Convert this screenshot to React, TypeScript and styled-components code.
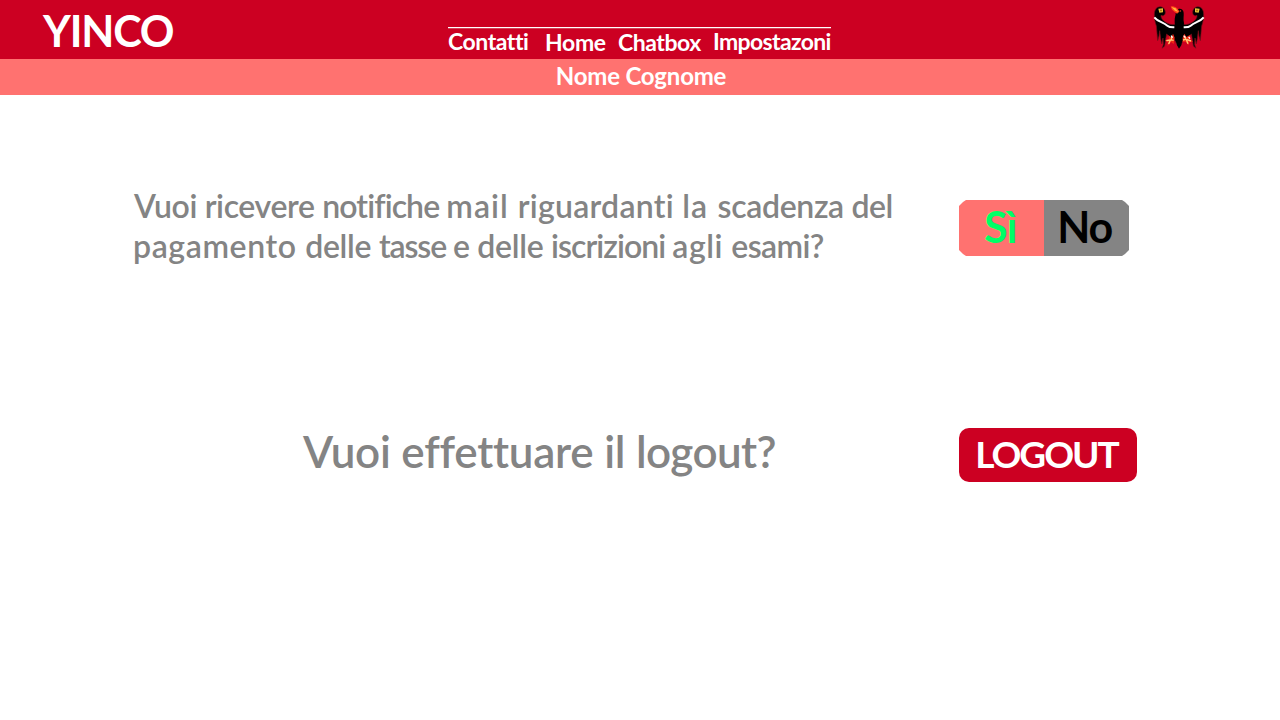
import React from 'react';
import styled, { createGlobalStyle } from 'styled-components';

const GlobalStyle = createGlobalStyle`
  body {
    margin: 0;
    background: #fff;
    font-family: Lato, "Liberation Sans", sans-serif;
    font-weight: 700;
    font-variant-ligatures: none;
  }
`;

const Header = styled.header`
  display: grid;
  grid-template-columns: 448px 383px 1fr;
  align-items: start;
  height: 59px;
  background: #cc0022;
  color: #fff;
`;

const Brand = styled.div`
  padding-left: 43px;
  font-size: 43px;
  line-height: 61px;
  height: 59px;
  letter-spacing: -1.2px;
`;

const Nav = styled.nav`
  margin-top: 27px;
  border-top: 1px solid #fff;
  box-shadow: inset 0 1px #d64059;
`;

const NavList = styled.div`
  display: grid;
  grid-template-columns: 97px 73px 95px auto;
  justify-content: start;
  padding-top: 1px;
`;

const NavLink = styled.a<{ $drop?: number; $spacing?: number }>`
  padding-top: ${p => p.$drop ?? 0}px;
  font-size: 23px;
  line-height: 24px;
  letter-spacing: ${p => p.$spacing ?? 0}px;
  white-space: nowrap;
`;

const Crest = styled.svg`
  width: 54px;
  height: 48px;
  margin: 3px 74px 0 auto;
`;

const UserBar = styled.div`
  height: 36px;
  line-height: 34px;
  padding-left: 2px;
  background: #ff7270;
  color: #fff;
  text-align: center;
  font-size: 24px;
  letter-spacing: -0.2px;
`;

const Settings = styled.main`
  padding-left: 134px;
  color: #848484;
  font-weight: 600;
`;

const Setting = styled.section<{ $top: number }>`
  display: grid;
  grid-template-columns: 825px auto;
  justify-content: start;
  align-items: start;
  padding-top: ${p => p.$top}px;
`;

const Question = styled.p`
  margin: 0;
  font-size: 32px;
  line-height: 40px;
  white-space: nowrap;
`;

const Line = styled.span<{ $shift?: number }>`
  display: block;
  margin-left: ${p => p.$shift ?? 0}px;
`;

const Word = styled.span<{ $spacing: number }>`
  letter-spacing: ${p => p.$spacing}px;
`;

const LogoutQuestion = styled.p`
  margin: 0;
  padding-left: 169px;
  font-size: 44px;
  line-height: 48px;
  white-space: nowrap;
`;

const Toggle = styled.div`
  display: flex;
  width: 170px;
  height: 56px;
  margin-top: 14px;
  clip-path: polygon(7px 0, 163px 0, 166px 2px, 170px 6px, 170px 50px, 166px 54px, 163px 56px, 7px 56px, 4px 54px, 0 50px, 0 6px, 4px 2px);
`;

const Option = styled.button<{ $on?: boolean }>`
  flex: 1;
  padding: ${p => (p.$on ? '1px 2px 3px 0' : '1px 3px 3px 0')};
  border: 0;
  background: ${p => (p.$on ? '#ff7270' : '#848484')};
  color: ${p => (p.$on ? '#00ff66' : '#000')};
  font: 700 43px/52px Lato, sans-serif;
  letter-spacing: -1px;
`;

const LogoutButton = styled.button`
  width: 178px;
  height: 54px;
  margin-top: 1px;
  padding: 1px 3px 3px 0;
  border: 0;
  border-radius: 10px;
  background: #cc0022;
  color: #fff;
  font: 700 37px/50px Lato, sans-serif;
  letter-spacing: -2px;
  white-space: nowrap;
`;

const WING =
  'M120 58 L108 56 L105 73 C92 76 80 70 73 64 C66 59 62 52 63 46 C70 50 76 45 76 37 C76 27 69 20 60 20 C49 20 43 30 43 44 C43 56 45 66 49 78 L51 100 L53 122 L57 108 L59 92 L62 116 L65 132 L69 114 L70 134 L66 145 L74 138 L77 118 L80 102 L88 110 L92 120 L98 112 L106 124 L112 136 L120 136 Z';

function Eagle() {
  return (
    <Crest viewBox="36 9 162 144" aria-label="Stemma">
      <g stroke="#75101a" strokeWidth="2" strokeLinejoin="round">
        <path d={WING} fill="#000" />
        <path d={WING} fill="#000" transform="translate(234 0) scale(-1 1)" />
      </g>
      <path d="M104 66 C103 52 108 44 107 39 L112 30 C118 22 130 27 131 38 C132 48 129 56 132 70 L124 136 L117 146 L111 136 Z" fill="#000" />
      <path d="M92 19 C103 17 114 24 118 35 L111 41 L104 36 L96 29 Z" fill="#ff4416" />
      <path d="M94 21 L107 25 L115 36 L105 32 Z" fill="#ffb640" />
      <circle cx="121" cy="33" r="2.5" fill="#e03322" />
      <path d="M43 52 C53 65 69 66 82 77 C89 83 96 82 103 82" fill="none" stroke="#fff" strokeWidth="6" />
      <path d="M191 52 C181 65 165 66 152 77 C145 83 138 82 131 82" fill="none" stroke="#fff" strokeWidth="6" />
      <path d="M55 26 L69 25 L69 37 L58 38 Z M179 26 L165 25 L165 37 L176 38 Z" fill="#e8c33a" />
      <path d="M61 29 h4 v5 h-4 Z M169 29 h4 v5 h-4 Z" fill="#8a5a10" />
      <g fill="#f02a16">
        <path d="M99 101 L104 113 L101 132 L93 126 L83 138 L83 126 L75 121 L87 116 L85 105 L94 113 Z" />
        <path d="M133 101 L128 113 L128 126 L137 125 L145 136 L148 126 L159 125 L148 116 L150 105 L139 111 Z" />
      </g>
      <path d="M95 109 L94 120 L101 121 M92 120 L79 122 M91 121 L86 132 M134 109 L137 118 L129 120 M139 118 L153 123 M139 119 L144 131" fill="none" stroke="#ffc978" strokeWidth="4" />
      <path d="M93 107 l5 6 M131 107 l5 6 M146 111 l4 5" stroke="#fff" strokeWidth="4" />
    </Crest>
  );
}

export default function App() {
  return (
    <>
      <GlobalStyle />
      <Header>
        <Brand>YINCO</Brand>
        <Nav>
          <NavList>
            <NavLink $spacing={-0.45}>Contatti</NavLink>
            <NavLink $drop={1} $spacing={-0.35}>Home</NavLink>
            <NavLink $drop={1} $spacing={-0.45}>Chatbox</NavLink>
            <NavLink $spacing={-0.65}>Impostazoni</NavLink>
          </NavList>
        </Nav>
        <Eagle />
      </Header>
      <UserBar>Nome Cognome</UserBar>
      <Settings>
        <Setting $top={91}>
          <Question>
            <Line>
              <Word $spacing={-0.36}>Vuoi ricevere </Word>
              <Word $spacing={-0.9}>notifiche </Word>
              <Word $spacing={1}>mail </Word>
              <Word $spacing={0.27}>riguardanti </Word>
              <Word $spacing={1.2}>la </Word>
              <Word $spacing={-0.35}>scadenza </Word>
              <Word $spacing={-0.5}>del</Word>
            </Line>
            <Line $shift={-1}>
              <Word $spacing={0.6}>pagamento </Word>
              <Word $spacing={-0.3}>delle </Word>
              <Word $spacing={-1.1}>tasse </Word>
              <Word $spacing={-0.3}>e delle </Word>
              <Word $spacing={-0.94}>iscrizioni </Word>
              <Word $spacing={0.5}>agli </Word>
              <Word $spacing={-0.6}>esami?</Word>
            </Line>
          </Question>
          <Toggle>
            <Option $on>Sì</Option>
            <Option>No</Option>
          </Toggle>
        </Setting>
        <Setting $top={161}>
          <LogoutQuestion>
            <Word $spacing={-0.25}>Vuoi effettuare il </Word>
            <Word $spacing={-0.6}>logout?</Word>
          </LogoutQuestion>
          <LogoutButton>LOGOUT</LogoutButton>
        </Setting>
      </Settings>
    </>
  );
}
